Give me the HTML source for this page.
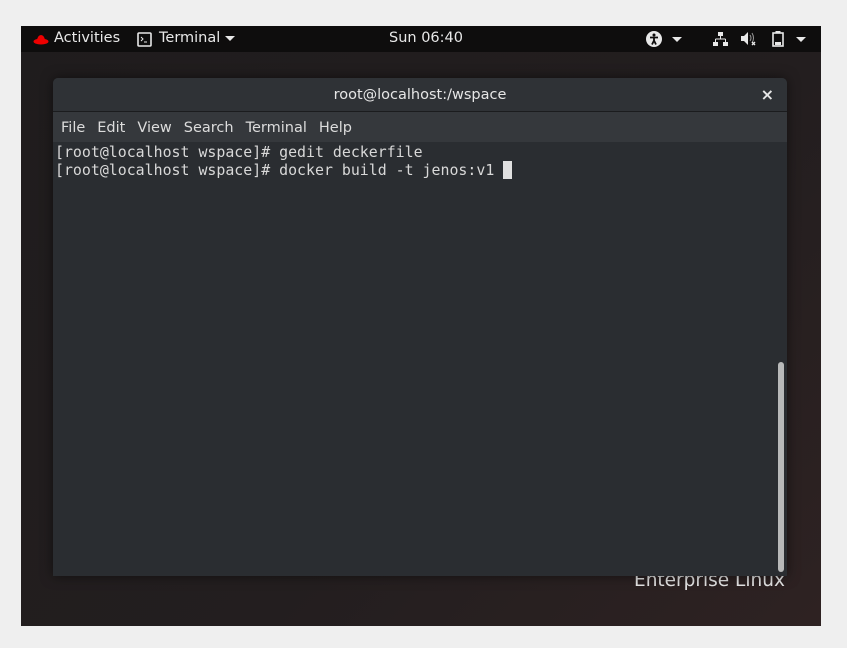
<!DOCTYPE html>
<html><head><meta charset="utf-8"><style>
*{margin:0;padding:0;box-sizing:border-box}
body{width:847px;height:648px;background:#efefef;position:relative;overflow:hidden;font-family:"DejaVu Sans","Liberation Sans",sans-serif}
#screen{position:absolute;left:21px;top:26px;width:800px;height:600px;background:linear-gradient(135deg,#1f1c1d 0%,#231e1f 60%,#2e2222 100%);overflow:hidden}
#bar{position:absolute;left:0;top:0;width:800px;height:26px;background:#0e0d0d;color:#e8e8e8;font-size:14.5px}
#bar span{position:absolute;top:4px}
.tri{display:inline-block;width:0;height:0;border-left:5px solid transparent;border-right:5px solid transparent;border-top:5px solid #e8e8e8;vertical-align:middle}
#win{position:absolute;left:32px;top:52px;width:734px;height:498px;background:#2b2e32;border-radius:5px 5px 0 0;box-shadow:0 0 12px rgba(0,0,0,.5);z-index:2}
#title{height:34px;background:#2f3236;border-bottom:1px solid #1b1c1e;border-radius:5px 5px 0 0;color:#e6e6e6;font-size:14.5px;text-align:center;line-height:34px;position:relative}
#menu{height:30px;background:#35383c;color:#dcdcdc;font-size:14.5px;line-height:32px;padding-left:8px}
#menu span{margin-right:12px}
#term{position:absolute;left:0;top:64px;width:734px;height:434px;background:#2a2d31}
pre{font-family:"DejaVu Sans Mono","Liberation Mono",monospace;font-size:14.9px;line-height:18px;color:#d8d8d8;padding:1px 0 0 2px}
#ent{position:absolute;left:613px;top:544px;color:#e4e4e4;font-size:18.5px;font-family:"DejaVu Sans",sans-serif;z-index:1}
</style></head><body>
<div id="screen">
<div id="bar">
<svg style="position:absolute;left:12px;top:8px" width="16" height="11" viewBox="0 0 16 11"><ellipse cx="8" cy="7.5" rx="7.5" ry="3" fill="#e00"/><path d="M4 6 Q5 1 8 1 Q11 1 12 6Z" fill="#e00"/></svg>
<span style="left:33px">Activities</span>
<svg style="position:absolute;left:116px;top:6px" width="15" height="15"><rect x="1" y="1" width="13" height="13" rx="1" fill="none" stroke="#e8e8e8" stroke-width="1.6"/><path d="M4 5l2 2-2 2M7 10h3" stroke="#e8e8e8" fill="none"/></svg>
<span style="left:138px">Terminal <i class="tri"></i></span>
<span style="left:368px">Sun 06:40</span>
<svg style="position:absolute;left:625px;top:5px" width="16" height="16"><circle cx="8" cy="8" r="8" fill="#e8e8e8"/><circle cx="8" cy="4" r="1.5" fill="#0e0d0d"/><path d="M4 6.5h8M8 6.5v3M8 9.5l-2 4M8 9.5l2 4" stroke="#0e0d0d" stroke-width="1.8"/></svg>
<i class="tri" style="position:absolute;left:651px;top:11px"></i>
<svg style="position:absolute;left:692px;top:6px" width="15" height="14"><rect x="5" y="0" width="5" height="4" fill="#e8e8e8"/><path d="M7.5 4v3M2.5 7h10M2.5 7v3M12.5 7v3" stroke="#e8e8e8"/><rect x="0" y="10" width="5" height="4" fill="#e8e8e8"/><rect x="10" y="10" width="5" height="4" fill="#e8e8e8"/></svg>
<svg style="position:absolute;left:720px;top:6px" width="16" height="15"><path d="M0 4h3l4-4v13l-4-4H0z" fill="#e8e8e8"/><path d="M9 3q2 3 0 6M11 1q3 5 0 10" stroke="#999" fill="none"/><path d="M11 10l3 3M14 10l-3 3" stroke="#e8e8e8" stroke-width="1.4"/></svg>
<svg style="position:absolute;left:751px;top:5px" width="12" height="16"><rect x="3.5" y="0" width="5" height="2" fill="#e8e8e8"/><rect x="1" y="2" width="10" height="13" fill="none" stroke="#e8e8e8" stroke-width="1.6"/><rect x="3" y="11" width="6" height="3" fill="#e8e8e8"/></svg>
<i class="tri" style="position:absolute;left:775px;top:11px"></i>
</div>
<div id="win">
<div id="title">root@localhost:/wspace<span style="position:absolute;right:13px;top:0;font-size:16px;font-weight:bold">×</span></div>
<div id="menu"><span>File</span><span>Edit</span><span>View</span><span>Search</span><span>Terminal</span><span>Help</span></div>
<div id="term"><pre>[root@localhost wspace]# gedit deckerfile
[root@localhost wspace]# docker build -t jenos:v1 <span style="background:#e0e0e0"> </span></pre>
<div style="position:absolute;left:725px;top:220px;width:6px;height:210px;background:#b8b9b9;border-radius:3px"></div>
</div>
</div>
<div id="ent">Enterprise Linux</div>
</div>
</body></html>
